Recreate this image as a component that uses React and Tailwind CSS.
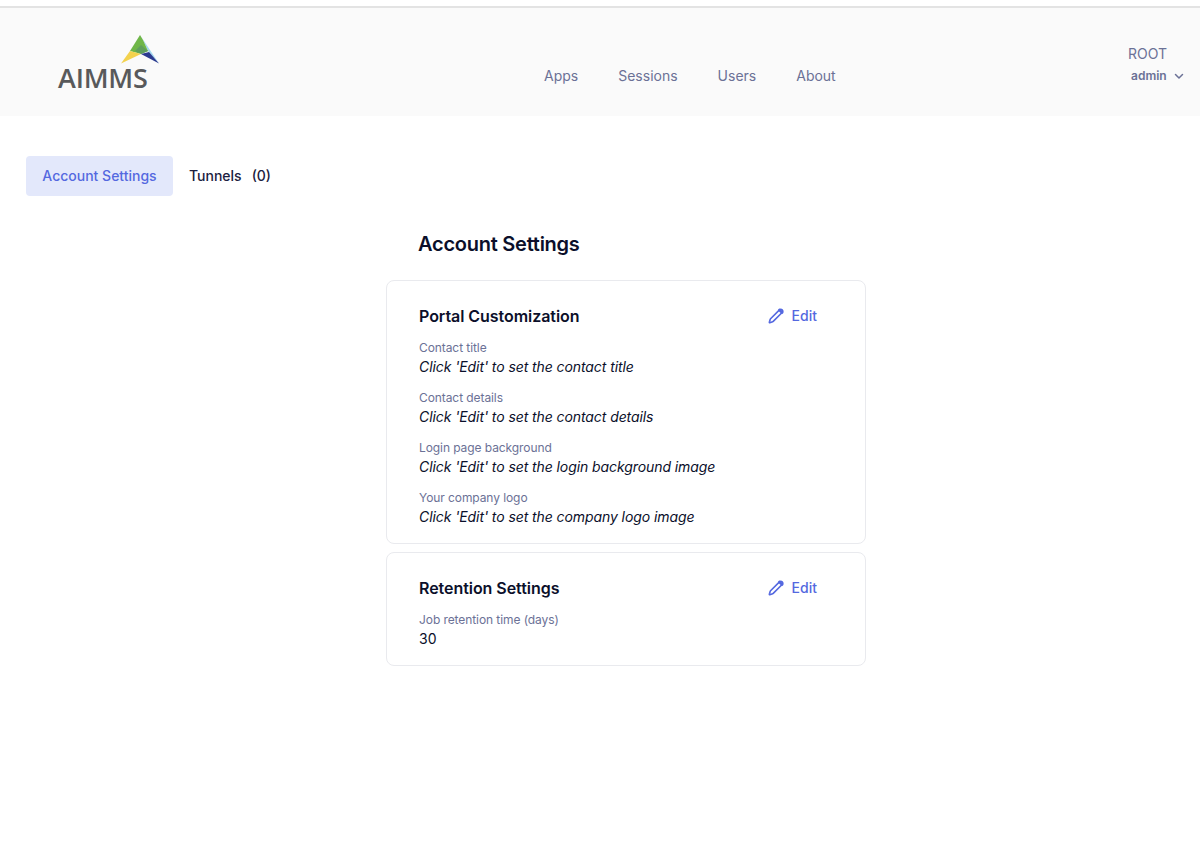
import React from "react";

function Pencil() {
  return (
    <svg width="16" height="16" viewBox="0 0 24 24" fill="none" stroke="currentColor" strokeWidth="2.4" strokeLinecap="round" strokeLinejoin="round">
      <path d="M21.174 6.812a1 1 0 0 0-3.986-3.987L3.842 16.174a2 2 0 0 0-.5.83l-1.321 4.352a.5.5 0 0 0 .623.622l4.353-1.32a2 2 0 0 0 .83-.497z" />
      <path d="M17.2 2.9l3.9 3.9" strokeWidth="4" />
    </svg>
  );
}

function Logo() {
  return (
    <div className="relative w-[102px] h-[54px]">
      <svg className="absolute left-[63px] top-0" width="39" height="29" viewBox="0 0 39 29">
        <polygon points="19,0 38,28.5 27,16 22,5" fill="#a3d8f0" />
        <polygon points="19,0 9,16 20,19 27,16 22,5" fill="#6fb648" />
        <polygon points="20,10 27,16 20,19 14,16" fill="#5f9f5c" />
        <polygon points="20,19 38,28.5 28,17" fill="#2b3a8f" />
        <polygon points="9,16 0,28.5 20,19" fill="#f3d24e" />
      </svg>
      <span className="absolute left-0 top-[28px] font-['Open_Sans',sans-serif] text-[27px] leading-[30px] font-semibold tracking-[-0.2px] text-[#58595b]">AIMMS</span>
    </div>
  );
}

function Field({ label, value, italic = true }) {
  return (
    <div>
      <div className="text-xs leading-[18px] tracking-[-0.08px] text-[#6b7196]">{label}</div>
      <div className={`text-sm leading-[20px] text-[#0b0f2a] ${italic ? "italic tracking-[-0.085px]" : ""}`}>{value}</div>
    </div>
  );
}

function Card({ title, children }) {
  return (
    <section className="w-[480px] rounded-lg border border-[#e9eaee] bg-white pl-[32px] pr-[48px] pt-[22px] pb-[16px]">
      <div className="flex items-center justify-between h-[26px]">
        <h3 className="text-base font-semibold leading-[26px] tracking-[-0.05px] text-[#0b0f2a]">{title}</h3>
        <button className="flex items-center gap-2 text-sm font-medium text-[#5468e0]">
          <Pencil />
          <span>Edit</span>
        </button>
      </div>
      <div className="mt-[10px] flex flex-col gap-3">{children}</div>
    </section>
  );
}

export default function App() {
  return (
    <div className="min-h-[856px] bg-white font-['Inter',sans-serif]">
      <div className="h-[8px] bg-white border-b-2 border-[#e3e3e3]" />
      <header className="relative h-[108px] bg-[#fafafa] flex items-start pl-[58px]">
        <div className="mt-[27px]"><Logo /></div>
        <nav className="absolute left-[544px] top-[58px] flex gap-10 text-sm leading-[20px] font-normal text-[#6b7196]">
          <a>Apps</a>
          <a>Sessions</a>
          <a>Users</a>
          <a>About</a>
        </nav>
        <div className="absolute left-[1128px] top-[36px] w-[64px]">
          <div className="text-sm leading-[20px] text-[#6b7196]">ROOT</div>
          <div className="mt-[2px] ml-[3px] flex items-center gap-[6px] text-xs leading-[20px] font-semibold text-[#6b7196]">
            admin
            <svg width="12" height="12" viewBox="0 0 24 24" fill="none" stroke="currentColor" strokeWidth="3" strokeLinecap="round" strokeLinejoin="round"><path d="m5 9 7 7 7-7" /></svg>
          </div>
        </div>
      </header>

      <div className="px-[26px] pt-[40px] flex items-center">
        <div className="h-[40px] w-[147px] rounded bg-[#e3e8fb] flex items-center justify-center text-sm font-medium text-[#5468e0]">Account Settings</div>
        <div className="ml-4 flex gap-[10px] text-sm font-medium text-[#1b2140]"><span>Tunnels</span><span>(0)</span></div>
      </div>

      <main className="ml-[386px] w-[480px] mt-[34px]">
        <h2 className="ml-[32px] text-xl leading-[28px] tracking-[-0.25px] font-semibold text-[#0b0f2a] mb-[22px]">Account Settings</h2>
        <div className="flex flex-col gap-2">
          <Card title="Portal Customization">
            <Field label="Contact title" value="Click 'Edit' to set the contact title" />
            <Field label="Contact details" value="Click 'Edit' to set the contact details" />
            <Field label="Login page background" value="Click 'Edit' to set the login background image" />
            <Field label="Your company logo" value="Click 'Edit' to set the company logo image" />
          </Card>
          <Card title="Retention Settings">
            <Field label="Job retention time (days)" value="30" italic={false} />
          </Card>
        </div>
      </main>
    </div>
  );
}
